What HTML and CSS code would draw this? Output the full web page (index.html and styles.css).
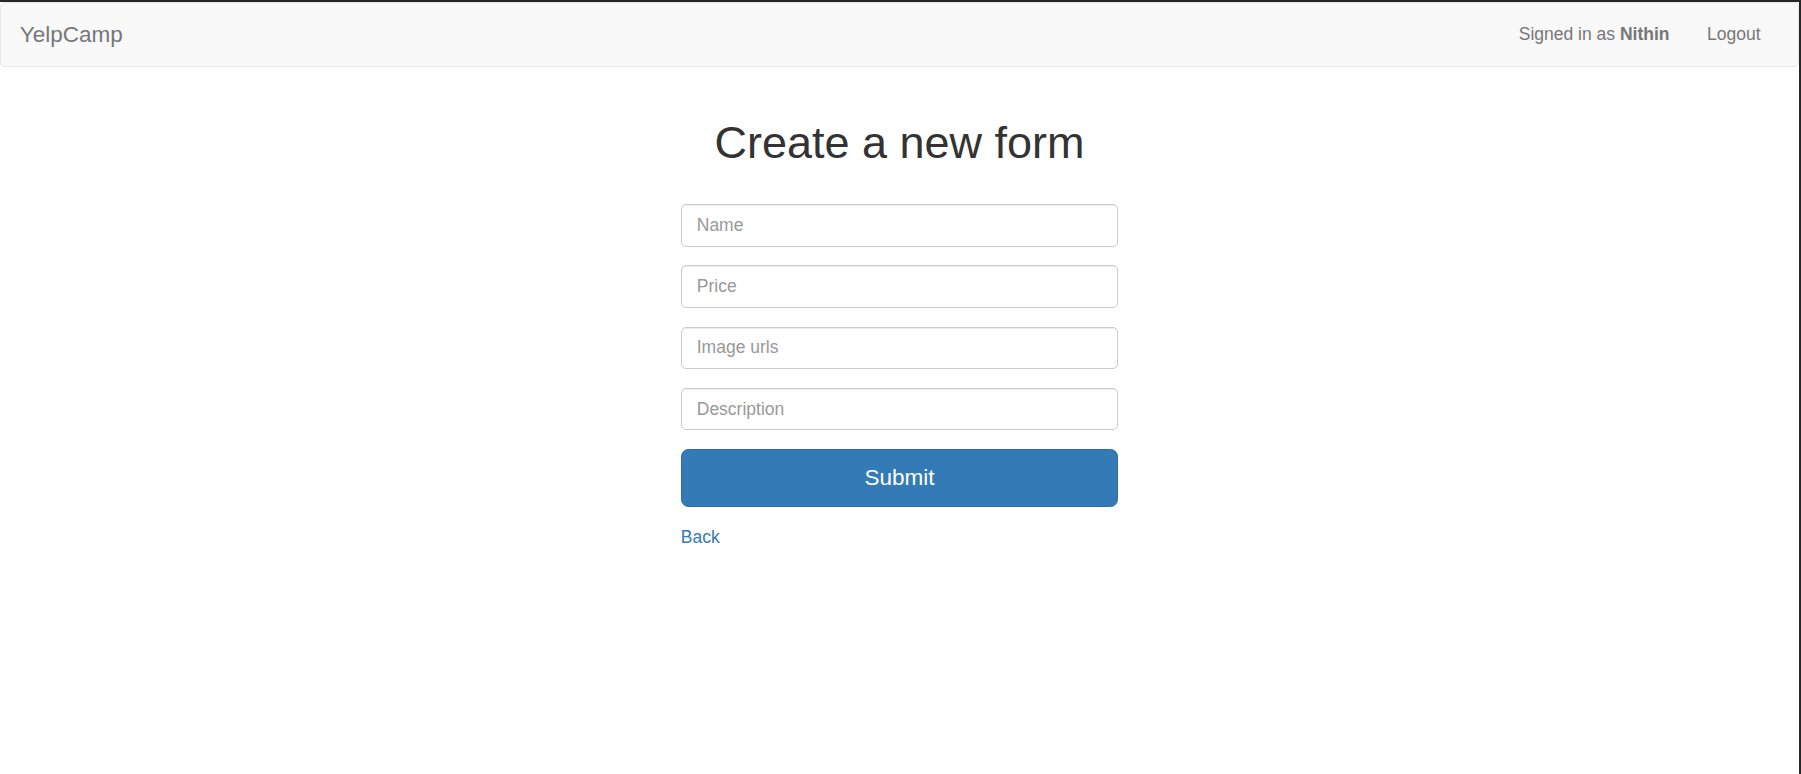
FILE: index.html
```html
<!DOCTYPE html>
<html lang="en">
<head>
<meta charset="utf-8">
<title>YelpCamp</title>
<link rel="stylesheet" href="styles.css">
</head>
<body>
<div class="frame">
  <nav class="navbar">
    <a class="brand" href="#">YelpCamp</a>
    <div class="nav-right">
      <p class="nav-text">Signed in as <strong>Nithin</strong></p>
      <a class="nav-link" href="#">Logout</a>
    </div>
  </nav>
  <main class="content">
    <h1 class="title">Create a new form</h1>
    <form class="form">
      <div class="form-group"><input class="form-control" type="text" placeholder="Name"></div>
      <div class="form-group"><input class="form-control" type="text" placeholder="Price"></div>
      <div class="form-group"><input class="form-control" type="text" placeholder="Image urls"></div>
      <div class="form-group"><input class="form-control" type="text" placeholder="Description"></div>
      <div class="form-group"><button class="btn-submit" type="button">Submit</button></div>
    </form>
    <a class="back" href="#">Back</a>
  </main>
</div>
</body>
</html>
```

FILE: styles.css
```css
* { box-sizing: border-box; }
html, body { margin: 0; padding: 0; height: 100%; }
body {
  font-family: "Liberation Sans", Arial, Helvetica, sans-serif;
  font-size: 17.5px;
  line-height: 25px;
  color: #333;
  background: #fff;
}
.frame {
  min-height: 100vh;
  border-top: 2px solid #262626;
  border-right: 2px solid #262626;
  background: #fff;
}
.navbar {
  display: flex;
  justify-content: space-between;
  align-items: flex-start;
  height: 64.5px;
  padding: 0 18.75px;
  background: #f8f8f8;
  border: 1px solid #e7e7e7;
  border-radius: 5px;
}
.brand {
  margin-left: -18.75px;
  padding: 18.75px;
  font-size: 22.5px;
  line-height: 25px;
  color: #777;
  text-decoration: none;
}
.nav-right {
  display: flex;
  align-items: flex-start;
}
.nav-text {
  margin: 18.75px 18.75px;
  color: #777;
  line-height: 25px;
}
.nav-text strong { font-weight: 700; }
.nav-link {
  padding: 18.75px;
  line-height: 25px;
  color: #777;
  text-decoration: none;
}
.content {
  width: 437.5px;
  margin: 0 auto;
  padding-top: 51.5px;
}
.title {
  margin: 0 0 36.5px;
  font-size: 45px;
  line-height: 49.5px;
  font-weight: 400;
  color: #333;
  text-align: center;
}
.form { margin: 0; }
.form-group { margin-bottom: 18.75px; }
.form-control {
  display: block;
  width: 100%;
  height: 42.5px;
  padding: 7.5px 15px;
  font-family: inherit;
  font-size: 17.5px;
  line-height: 25px;
  color: #555;
  background: #fff;
  border: 1px solid #ccc;
  border-radius: 5px;
  box-shadow: inset 0 1px 1px rgba(0,0,0,.075);
  outline: none;
}
.form-control::placeholder { color: #999; }
.btn-submit {
  display: block;
  width: 100%;
  height: 57.5px;
  padding: 12.5px 20px;
  font-family: inherit;
  font-size: 22.5px;
  line-height: 30px;
  color: #fff;
  background: #337ab7;
  border: 1px solid #2e6da4;
  border-radius: 7.5px;
  cursor: pointer;
}
.back {
  display: inline-block;
  color: #337ab7;
  text-decoration: none;
  line-height: 25px;
}
```
